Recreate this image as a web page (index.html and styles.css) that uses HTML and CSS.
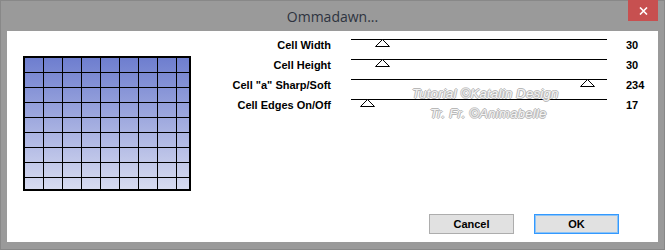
FILE: index.html
```html
<!DOCTYPE html>
<html>
<head>
<meta charset="utf-8">
<link rel="stylesheet" href="styles.css">
</head>
<body>
<div class="window">
  <div class="titlebar">
    <span class="title">Ommadawn...</span>
    <div class="close"><svg width="9" height="8" viewBox="0 0 9 8"><path d="M1 0.5 L8 7.5 M8 0.5 L1 7.5" stroke="#fff" stroke-width="1.6"/></svg></div>
  </div>
  <div class="panel">
    <div class="content">
      <div class="preview"></div>
      <div class="form">
        <div class="row">
          <div class="label">Cell Width</div>
          <div class="track"><svg class="thumb" style="left:24px" width="15" height="8" viewBox="0 0 15 8"><polygon points="7.5,0.5 14.5,7.5 0.5,7.5" fill="#fff" stroke="#000" stroke-width="1"/></svg></div>
          <div class="value">30</div>
        </div>
        <div class="row">
          <div class="label">Cell Height</div>
          <div class="track"><svg class="thumb" style="left:24px" width="15" height="8" viewBox="0 0 15 8"><polygon points="7.5,0.5 14.5,7.5 0.5,7.5" fill="#fff" stroke="#000" stroke-width="1"/></svg></div>
          <div class="value">30</div>
        </div>
        <div class="row">
          <div class="label">Cell "a" Sharp/Soft</div>
          <div class="track"><svg class="thumb" style="left:229px" width="15" height="8" viewBox="0 0 15 8"><polygon points="7.5,0.5 14.5,7.5 0.5,7.5" fill="#fff" stroke="#000" stroke-width="1"/></svg></div>
          <div class="value">234</div>
        </div>
        <div class="row">
          <div class="label">Cell Edges On/Off</div>
          <div class="track"><svg class="thumb" style="left:9px" width="15" height="8" viewBox="0 0 15 8"><polygon points="7.5,0.5 14.5,7.5 0.5,7.5" fill="#fff" stroke="#000" stroke-width="1"/></svg></div>
          <div class="value">17</div>
        </div>
      </div>
    </div>
    <div class="buttons">
      <button class="btn">Cancel</button>
      <button class="btn btn-default">OK</button>
    </div>
    <div class="watermark">
      <div class="wm1">Tutorial ©Katalin Design</div>
      <div class="wm2">Tr. Fr. ©Animabelle</div>
    </div>
  </div>
</div>
</body>
</html>
```
FILE: styles.css
```css
html, body {
  margin: 0;
  padding: 0;
  background: #9a9a9a;
}
.window {
  box-sizing: border-box;
  width: 665px;
  height: 250px;
  background: #9a9a9a;
  border: 1px solid #888;
  display: flex;
  flex-direction: column;
}
.titlebar {
  height: 30px;
  position: relative;
  display: flex;
  align-items: center;
  justify-content: center;
}
.title {
  font-family: "Open Sans", sans-serif;
  font-size: 14px;
  color: #2e3440;
  margin-top: 1px;
}
.close {
  position: absolute;
  left: 627px;
  top: -1px;
  width: 30px;
  height: 21px;
  background: #c75050;
  display: flex;
  align-items: center;
  justify-content: center;
}
.panel {
  position: relative;
  margin-left: 6px;
  width: 651px;
  height: 211px;
  background: #fff;
  display: flex;
  flex-direction: column;
  font-family: "Liberation Sans", Arial, sans-serif;
  font-size: 11px;
  font-weight: bold;
  color: #000;
}
.content {
  display: flex;
  align-items: flex-start;
}
.preview {
  box-sizing: border-box;
  margin-left: 16px;
  margin-top: 25px;
  width: 168px;
  height: 135px;
  border: 2px solid #000;
  background-image:
    repeating-linear-gradient(to right, transparent 0 18px, #000 18px 19px),
    repeating-linear-gradient(to bottom, transparent 0 14px, #000 14px 15px),
    linear-gradient(to bottom, #6e7ecf, #d7dbf0);
}
.form {
  padding-top: 4px;
  display: flex;
  flex-direction: column;
}
.row {
  height: 20px;
  display: flex;
  align-items: center;
}
.label {
  width: 140px;
  text-align: right;
}
.track {
  position: relative;
  align-self: stretch;
  margin-left: 20px;
  width: 256px;
  box-sizing: border-box;
  margin-top: 4px;
  border-top: 1px solid #000;
}
.thumb {
  position: absolute;
  top: -1px;
}
.value {
  margin-left: 19px;
}
.buttons {
  margin-top: auto;
  margin-bottom: 8px;
  display: flex;
  justify-content: flex-end;
  gap: 20px;
  padding-right: 39px;
}
.btn {
  box-sizing: border-box;
  width: 85px;
  height: 20px;
  background: #e1e1e1;
  border: 1px solid #adadad;
  font-family: "Liberation Sans", Arial, sans-serif;
  font-size: 11px;
  font-weight: bold;
  color: #000;
  padding: 0;
}
.btn-default {
  border: 1px solid #3399ff;
  box-shadow: inset 0 0 0 1px #8cc3f5;
}
.watermark {
  position: absolute;
  left: 405px;
  top: 53px;
  font-family: "Liberation Sans", Arial, sans-serif;
  font-style: italic;
  font-weight: normal;
  font-size: 13px;
  letter-spacing: 0.3px;
  line-height: 20px;
  color: #f4f4f4;
  text-shadow: 1px 0 0 #b8b8b8, -1px 0 0 #b8b8b8, 0 1px 0 #b8b8b8, 0 -1px 0 #b8b8b8;
}
.wm2 {
  padding-left: 18px;
}
```
